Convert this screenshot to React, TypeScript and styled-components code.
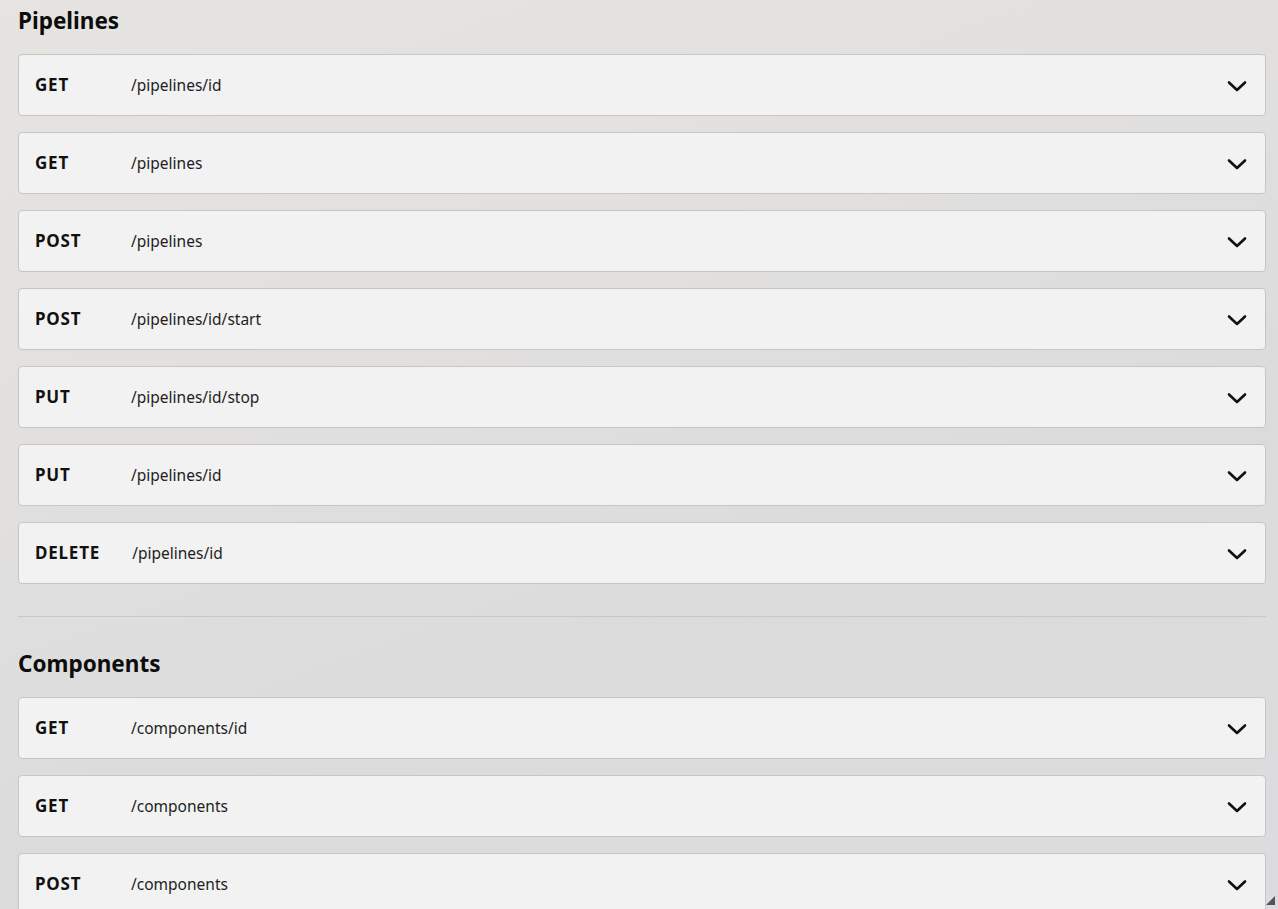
import * as React from 'react';
import styled, { createGlobalStyle } from 'styled-components';

interface Endpoint {
  method: string;
  path: string;
}

const pipelines: Endpoint[] = [
  { method: 'GET', path: '/pipelines/id' },
  { method: 'GET', path: '/pipelines' },
  { method: 'POST', path: '/pipelines' },
  { method: 'POST', path: '/pipelines/id/start' },
  { method: 'PUT', path: '/pipelines/id/stop' },
  { method: 'PUT', path: '/pipelines/id' },
  { method: 'DELETE', path: '/pipelines/id' },
];

const components: Endpoint[] = [
  { method: 'GET', path: '/components/id' },
  { method: 'GET', path: '/components' },
  { method: 'POST', path: '/components' },
];

const Chevron = () => (
  <svg width="20" height="12" viewBox="0 0 20 12" fill="none">
    <path d="M2 2.5 L10 10 L18 2.5" stroke="#111" strokeWidth="2.6" strokeLinecap="round" strokeLinejoin="round"/>
  </svg>
);

const EndpointList = ({ items }: { items: Endpoint[] }) => (
  <List>
    {items.map((e, i) => (
      <Row key={i}>
        <Method>{e.method}</Method>
        <Path>{e.path}</Path>
        <Toggle><Chevron/></Toggle>
      </Row>
    ))}
  </List>
);

export default function App() {
  return (
    <>
      <GlobalStyle/>
      <Page>
        <SectionTitle>Pipelines</SectionTitle>
        <EndpointList items={pipelines}/>
        <Divider/>
        <SectionTitle>Components</SectionTitle>
        <EndpointList items={components}/>
      </Page>
      <Corner>
        <svg width="9" height="9" viewBox="0 0 9 9"><path d="M9 0 L9 9 L0 9 Z" fill="#555"/></svg>
      </Corner>
    </>
  );
}

const GlobalStyle = createGlobalStyle`
  html, body {
    margin: 0;
    height: 100%;
    overflow: hidden;
  }
  body {
    font-family: "Noto Sans", "DejaVu Sans", sans-serif;
    color: #111;
    background: linear-gradient(160deg, #e6e4e1 0%, #e1e0df 35%, #dcdbdc 65%, #dcdcde 100%);
  }
`;

const Page = styled.div`
  display: flex;
  flex-direction: column;
  padding: 0 12px 0 18px;
`;

const SectionTitle = styled.h2`
  margin: 6px 0 18px;
  font-size: 22.5px;
  line-height: 30px;
  font-weight: 700;
  color: #0c0c0c;
`;

const List = styled.div`
  display: flex;
  flex-direction: column;
  gap: 16px;
`;

const Row = styled.div`
  display: flex;
  align-items: center;
  box-sizing: border-box;
  height: 62px;
  padding: 0 18px 0 16px;
  background: #f2f2f2;
  border: 1px solid #c6c6c6;
  border-radius: 4px;
`;

const Method = styled.span`
  box-sizing: border-box;
  min-width: 96px;
  padding-right: 32px;
  margin-top: -1px;
  font-size: 17px;
  font-weight: 700;
  color: #111;
  letter-spacing: 0.8px;
`;

const Path = styled.span`
  flex: 1;
  font-size: 15.5px;
  color: #1e1e1e;
`;

const Toggle = styled.span`
  display: flex;
  align-items: center;
  margin-top: 2px;
`;

const Divider = styled.hr`
  margin: 32px 0 26px;
  border: 0;
  border-top: 1px solid #c8c8c8;
  height: 0;
`;

const Corner = styled.div`
  position: fixed;
  right: 3px;
  bottom: 4px;
  line-height: 0;
`;
